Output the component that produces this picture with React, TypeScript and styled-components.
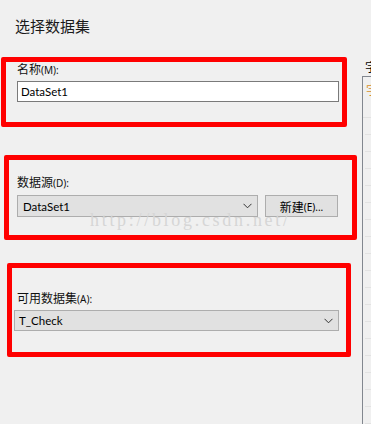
import React from "react";
import styled, { createGlobalStyle } from "styled-components";

const Global = createGlobalStyle`
  html, body { margin: 0; padding: 0; background: #f0f0f0; }
  * { box-sizing: border-box; }
`;

const Root = styled.div`
  display: flex;
  width: 371px;
  height: 424px;
  overflow: hidden;
  background: #f0f0f0;
  font-family: Lato, "Noto Sans CJK SC", sans-serif;
  color: #000;
`;

const LeftCol = styled.div`
  position: relative;
  width: 362px;
  flex: none;
  display: flex;
  flex-direction: column;
`;

const Title = styled.div`
  margin: 16px 0 0 15px;
  font-family: "Noto Sans CJK SC", sans-serif;
  font-size: 15px;
  line-height: 20px;
  color: #1a1a1a;
`;

const Box = styled.section<{ $left: number; $top: number; $w: number; $h: number; $pt: number; $pl: number; $gap: number }>`
  margin-left: ${(p) => p.$left}px;
  margin-top: ${(p) => p.$top}px;
  width: ${(p) => p.$w}px;
  height: ${(p) => p.$h}px;
  border: 5px solid #ff0000;
  border-radius: 2px;
  padding: ${(p) => p.$pt}px 0 0 ${(p) => p.$pl}px;
  display: flex;
  flex-direction: column;
  gap: ${(p) => p.$gap}px;
`;

const Label = styled.div`
  font-family: "Noto Sans CJK SC", sans-serif;
  font-size: 12px;
  line-height: 14px;
  height: 14px;
  color: #111;
  white-space: nowrap;
`;

const Key = styled.span`
  font-family: "Noto Sans", "Noto Sans CJK SC", sans-serif;
  font-size: 10px;
`;

const TextInput = styled.div`
  width: 322px;
  height: 21px;
  background: #fff;
  border: 1px solid #7a7a7a;
  padding-left: 3px;
  font-size: 11.5px;
  line-height: 19px;
`;

const Row = styled.div`
  display: flex;
  gap: 7px;
`;

const Combo = styled.div<{ $w: number; $h: number; $pl: number }>`
  width: ${(p) => p.$w}px;
  height: ${(p) => p.$h}px;
  background: #e1e1e1;
  border: 1px solid #adadad;
  display: flex;
  align-items: center;
  justify-content: space-between;
  padding: 0 5px 0 ${(p) => p.$pl}px;
  font-size: 11.5px;
`;

const Chevron = () => (
  <svg width="9" height="6" viewBox="0 0 9 6">
    <polyline points="0.5,0.8 4.5,4.8 8.5,0.8" fill="none" stroke="#333" strokeWidth="1" />
  </svg>
);

const Button = styled.div`
  width: 73px;
  height: 22px;
  background: #e1e1e1;
  border: 1px solid #adadad;
  display: flex;
  align-items: center;
  justify-content: center;
  font-family: "Noto Sans CJK SC", sans-serif;
  font-size: 12px;
  padding-top: 1px;
`;

const Watermark = styled.div`
  position: absolute;
  left: 90px;
  top: 210px;
  font-family: "Liberation Serif", serif;
  font-size: 18px;
  letter-spacing: 2.7px;
  color: #d6d6d6;
  white-space: nowrap;
  pointer-events: none;
`;

const RightCol = styled.div`
  flex: 1;
  display: flex;
  flex-direction: column;
  overflow: hidden;
`;

const RightLabel = styled.div`
  margin: 60px 0 0 3px;
  height: 21px;
  font-family: "Noto Sans CJK SC", sans-serif;
  font-size: 12px;
  line-height: 14px;
  white-space: nowrap;
`;

const ListBox = styled.div`
  flex: 1;
  border-left: 1.5px solid #82878f;
  border-top: 1px solid #82878f;
  display: flex;
  flex-direction: column;
`;

const ListHeader = styled.div`
  height: 41px;
  padding: 4px 0 0 3px;
  font-family: "Noto Sans CJK SC", sans-serif;
  font-size: 12px;
  color: #d8902a;
  white-space: nowrap;
  border-bottom: 1px solid #e2e2e2;
`;

const ListRow = styled.div`
  height: 17px;
  margin-left: 2px;
  border-bottom: 1px solid #e2e2e2;
`;

export default function App() {
  return (
    <>
      <Global />
      <Root>
        <LeftCol>
          <Title>选择数据集</Title>
          <Box $left={1} $top={21} $w={346} $h={70} $pt={0} $pl={11} $gap={5}>
            <Label>
              名称<Key>(M):</Key>
            </Label>
            <TextInput>DataSet1</TextInput>
          </Box>
          <Box $left={4} $top={28} $w={353} $h={85} $pt={15} $pl={8} $gap={6}>
            <Label>
              数据源<Key>(D):</Key>
            </Label>
            <Row>
              <Combo $w={241} $h={22} $pl={5}>
                <span>DataSet1</span>
                <Chevron />
              </Combo>
              <Button>
                新建<Key>(E)...</Key>
              </Button>
            </Row>
          </Box>
          <Box $left={7} $top={23} $w={344} $h={94} $pt={23} $pl={5} $gap={5}>
            <Label>
              可用数据集<Key>(A):</Key>
            </Label>
            <Combo $w={325} $h={21} $pl={4} style={{ marginLeft: -3 }}>
              <span>T_Check</span>
              <Chevron />
            </Combo>
          </Box>
          <Watermark>http://blog.csdn.net/</Watermark>
        </LeftCol>
        <RightCol>
          <RightLabel>字段(F):</RightLabel>
          <ListBox>
            <ListHeader>字段名</ListHeader>
            {Array.from({ length: 18 }).map((_, i) => (
              <ListRow key={i} />
            ))}
          </ListBox>
        </RightCol>
      </Root>
    </>
  );
}
